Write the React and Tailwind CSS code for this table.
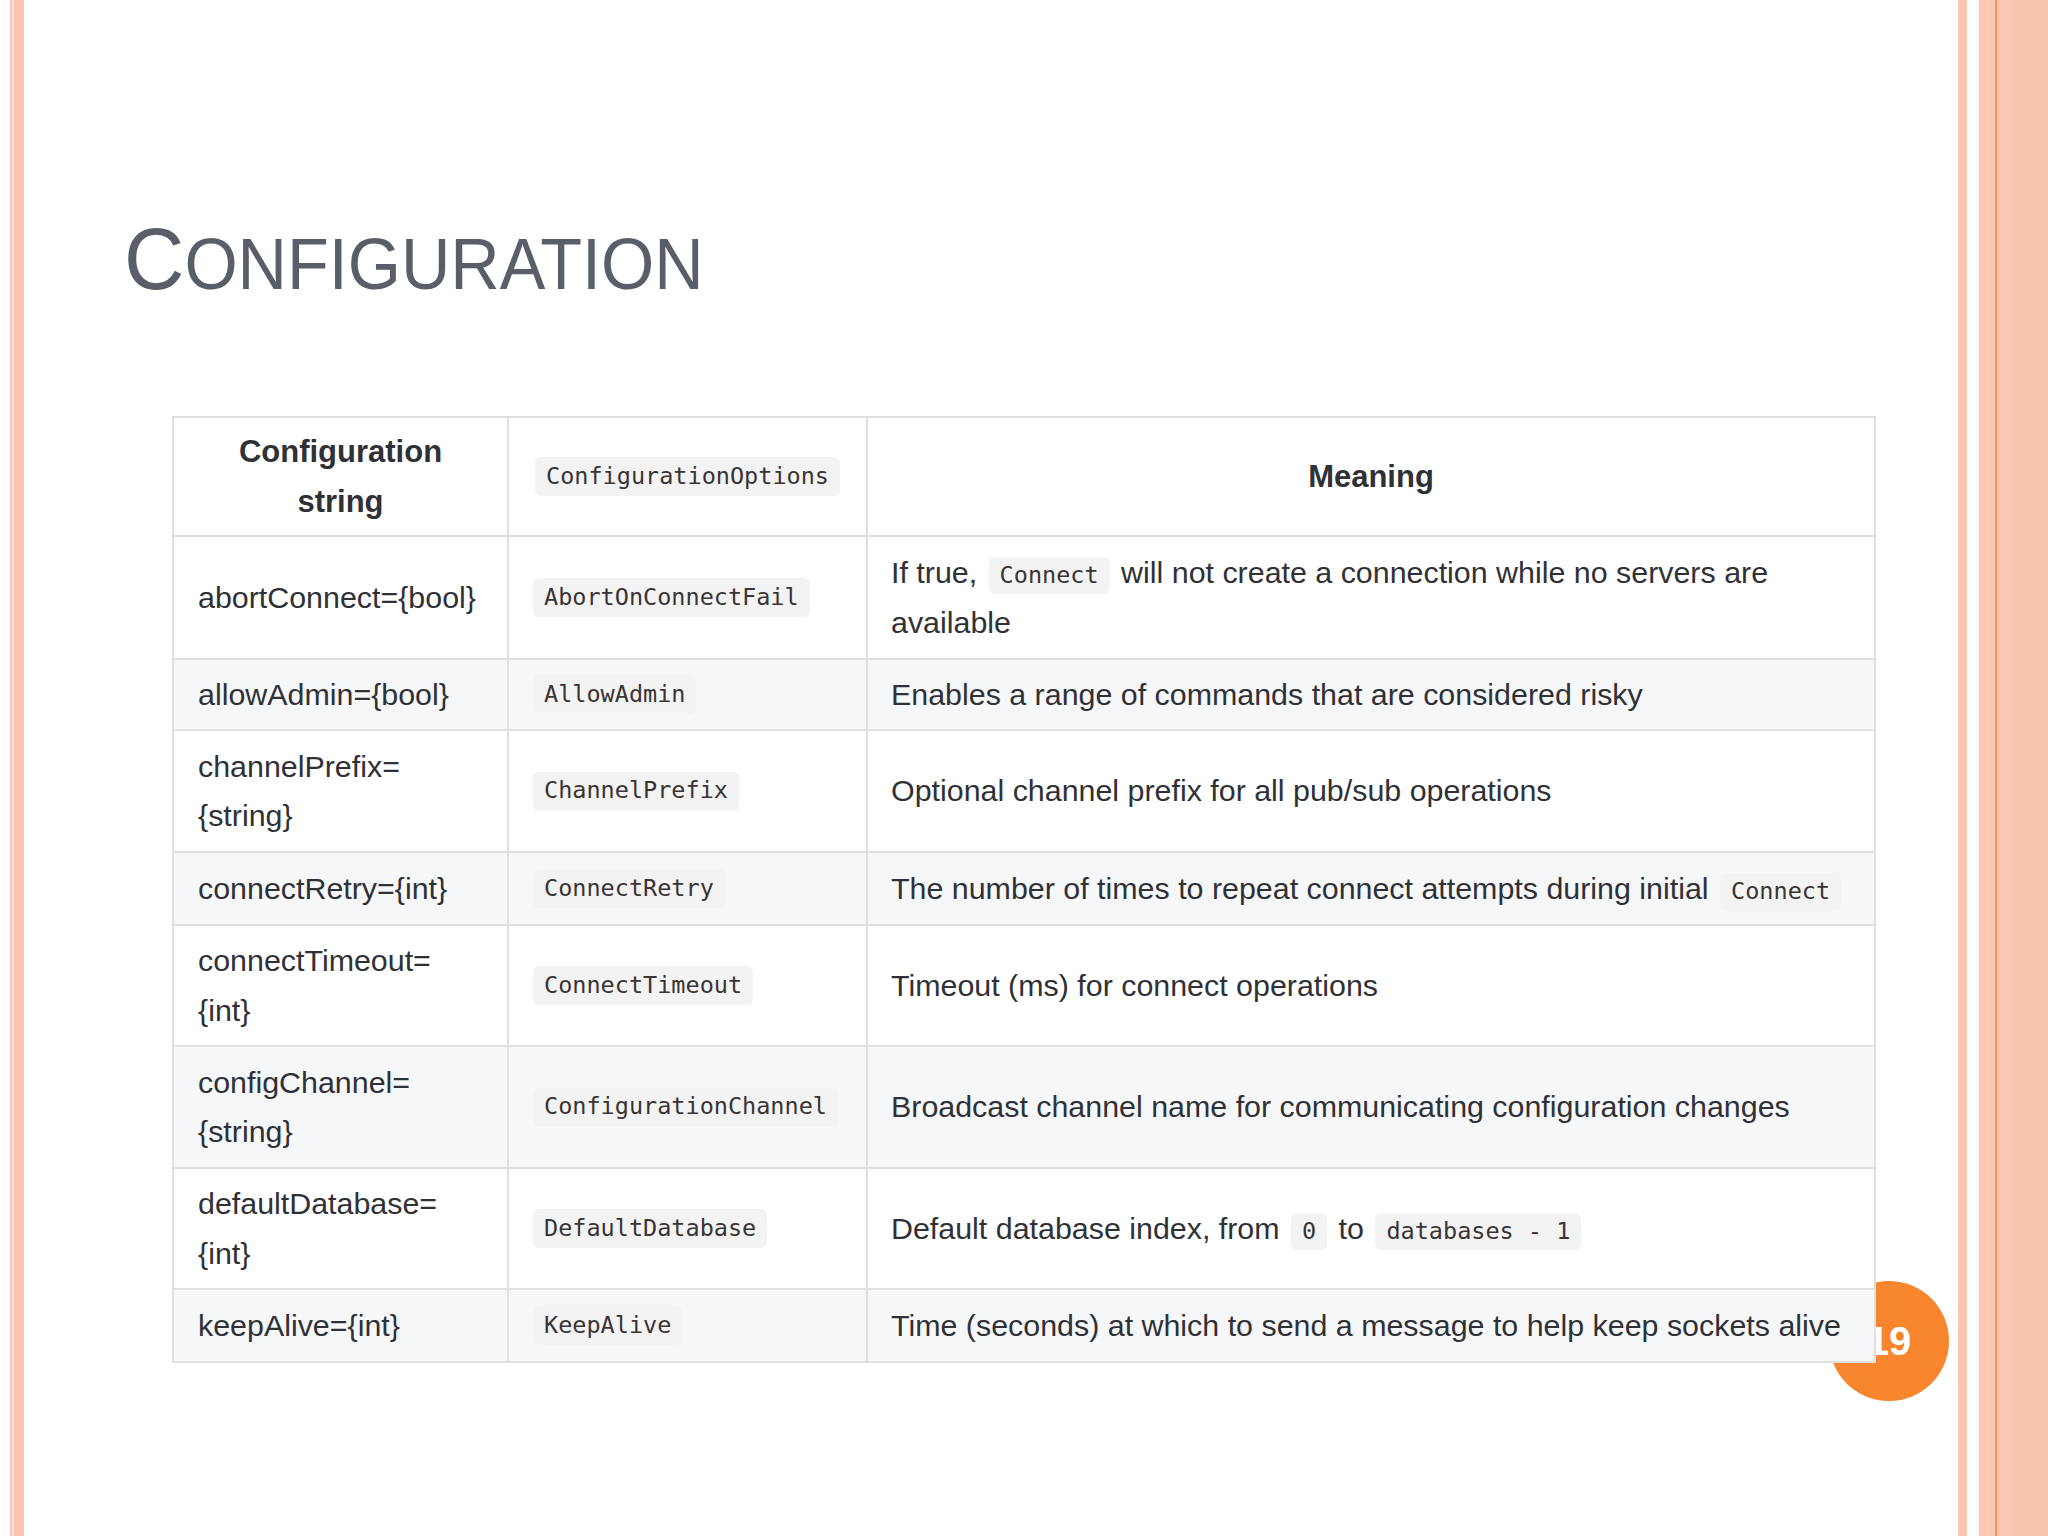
import React from 'react';

const body = { fontFamily: '"Liberation Sans", Arial, sans-serif' };
const mono = { fontFamily: '"DejaVu Sans Mono", "Liberation Mono", monospace' };

function Code({ children, inline = false }) {
    if (inline) {
        return (
            <code
                style={mono}
                className="inline-block mx-[3px] px-[11px] py-[5px] leading-[27px] text-[23.5px] rounded-[6px] bg-[#f3f3f4] text-[#3a3434] whitespace-pre"
            >
                {children}
            </code>
        );
    }
    return (
        <code
            style={mono}
            className="inline-flex items-center h-[39px] px-[11px] text-[23.5px] rounded-[6px] bg-[#f3f3f4] text-[#3a3434] whitespace-pre"
        >
            {children}
        </code>
    );
}

const rows = [
    {
        key: ['abortConnect={bool}'],
        opt: 'AbortOnConnectFail',
        meaning: (
            <>
                If true, <Code inline>Connect</Code> will not create a connection while no servers are
                <br />
                available
            </>
        ),
    },
    { key: ['allowAdmin={bool}'], opt: 'AllowAdmin', meaning: 'Enables a range of commands that are considered risky' },
    { key: ['channelPrefix=', '{string}'], opt: 'ChannelPrefix', meaning: 'Optional channel prefix for all pub/sub operations' },
    {
        key: ['connectRetry={int}'],
        opt: 'ConnectRetry',
        meaning: (
            <>
                The number of times to repeat connect attempts during initial <Code inline>Connect</Code>
            </>
        ),
    },
    { key: ['connectTimeout=', '{int}'], opt: 'ConnectTimeout', meaning: 'Timeout (ms) for connect operations' },
    { key: ['configChannel=', '{string}'], opt: 'ConfigurationChannel', meaning: 'Broadcast channel name for communicating configuration changes' },
    {
        key: ['defaultDatabase=', '{int}'],
        opt: 'DefaultDatabase',
        meaning: (
            <>
                Default database index, from <Code inline>0</Code> to <Code inline>databases - 1</Code>
            </>
        ),
    },
    { key: ['keepAlive={int}'], opt: 'KeepAlive', meaning: 'Time (seconds) at which to send a message to help keep sockets alive' },
];

function ConfigTable() {
    const cell = 'flex items-center border-r-2 border-b-2 border-[#e0e0e3]';
    return (
        <div
            style={body}
            className="relative z-10 ml-[148px] w-[1704px] grid grid-cols-[335px_359px_1008px] grid-rows-[119px_123px_71px_122px_73px_121px_122px_121px_73px] border-l-2 border-t-2 border-[#e0e0e3] text-[30.4px] leading-[49.5px] text-[#2f3136]"
        >
            {/* header */}
            <div className={`${cell} justify-center bg-white font-bold text-[31px] text-center`}>
                <span>
                    Configuration
                    <br />
                    string
                </span>
            </div>
            <div className={`${cell} justify-center bg-white`}>
                <Code>ConfigurationOptions</Code>
            </div>
            <div className={`${cell} justify-center bg-white font-bold text-[31px]`}>Meaning</div>

            {rows.map((r, i) => {
                const bg = i % 2 === 1 ? 'bg-[#f6f7f9]' : 'bg-white';
                return (
                    <React.Fragment key={r.opt}>
                        <div className={`${cell} ${bg} pl-[24px]`}>
                            <span>
                                {r.key.map((line, j) => (
                                    <span key={j} className="block">{line}</span>
                                ))}
                            </span>
                        </div>
                        <div className={`${cell} ${bg} pl-[24px]`}>
                            <Code>{r.opt}</Code>
                        </div>
                        <div className={`${cell} ${bg} pl-[23px] pr-[6px]`}>
                            <span className="whitespace-nowrap">{r.meaning}</span>
                        </div>
                    </React.Fragment>
                );
            })}
        </div>
    );
}

export default function App() {
    return (
        <div className="w-[2048px] h-[1536px] overflow-hidden flex bg-white">
            {/* left border stripes */}
            <div className="w-[10px] shrink-0 bg-white" />
            <div className="w-[2px] shrink-0 bg-[#f5c5b9]" />
            <div className="w-[2px] shrink-0 bg-[#fde2d8]" />
            <div className="w-[10px] shrink-0 bg-[#fcc3ae]" />

            {/* slide content */}
            <div className="relative w-[1934px] shrink-0">
                <h1
                    style={body}
                    className="mt-[215px] ml-[100px] h-[88px] leading-[88px] text-[#5a5e69] font-normal origin-left scale-x-[0.95] whitespace-nowrap"
                >
                    <span className="text-[88px]">C</span>
                    <span className="text-[72px]">ONFIGURATION</span>
                </h1>

                <div className="mt-[113px]">
                    <ConfigTable />
                </div>

                {/* page number */}
                <div
                    style={body}
                    className="absolute z-0 left-[1805px] top-[1281px] w-[120px] h-[120px] rounded-full bg-[#f8862f] flex items-center justify-center text-white font-bold text-[40px]"
                >
                    19
                </div>
            </div>

            {/* right border stripes */}
            <div className="w-[9px] shrink-0 bg-[#fcc5b4]" />
            <div className="w-[12px] shrink-0 bg-white" />
            <div className="w-[16px] shrink-0 bg-[#fcc8b4]" />
            <div className="w-[2px] shrink-0 bg-[#f2965a]" />
            <div className="w-[15px] shrink-0 bg-[#fcc8b4]" />
            <div className="flex-1 bg-[#f9c4ae]" />
        </div>
    );
}
